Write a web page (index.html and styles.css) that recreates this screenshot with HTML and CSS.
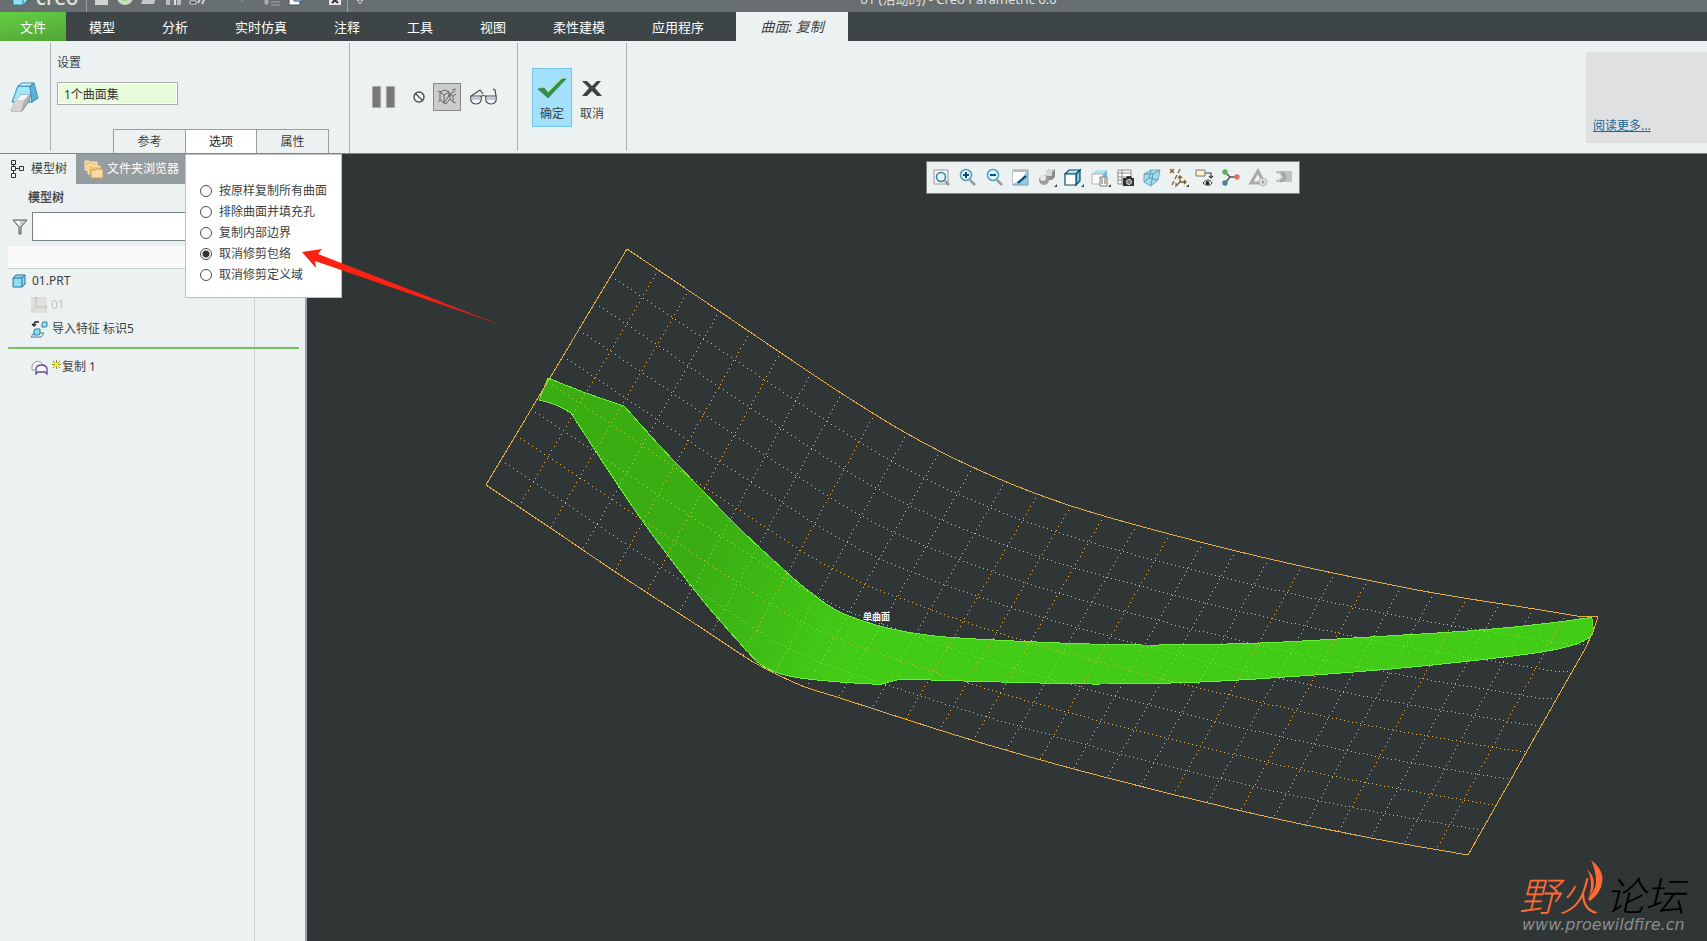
FILE: index.html
```html
<!DOCTYPE html>
<html lang="zh-CN">
<head>
<meta charset="utf-8">
<title>01 (活动的) - Creo Parametric 6.0</title>
<link rel="stylesheet" href="styles.css">
</head>
<body>
<header class="titlebar">
  <div class="quick">
    <svg class="q-logo" width="16" height="20" viewBox="0 0 16 20"><path d="M1 4l4-3h10v12l-4 4H1z" fill="#8fe0f7" stroke="#2b7fa0"/><path d="M11 17V5l4-4" fill="none" stroke="#2b7fa0"/></svg>
    <span class="brand">creo</span>
    <i class="q-sep"></i>
    <svg class="q-icons" width="252" height="20" viewBox="0 0 252 20">
      <path d="M0 0h13v17H0z" fill="#d2d4d4"/>
      <circle cx="30" cy="9" r="8" fill="#cfd8cb"/><circle cx="30" cy="8" r="5" fill="#8fdc6a"/>
      <path d="M51 3h12l-4 13H46z" fill="#c6c8c8"/>
      <path d="M71 1h15v16H71z" fill="#b9bcbc"/><path d="M75 11h7v6h-7z" fill="#747a7a"/><path d="M79 12h2v5h-2z" fill="#ddd"/>
      <path d="M95 13h6v3h-6z" fill="#3a4040" stroke="#ddd"/><path d="M103 15l4-8M107 16l4-8" stroke="#d0d3d3" stroke-width="2"/>
      <path d="M134 12c4-5 9-5 14 2M141 8h7" stroke="#7f8787" stroke-width="2" fill="none"/>
      <path d="M170 12h3v4h-3zM176 11h9M176 14h9M176 17h9" fill="#aaa" stroke="#aaa"/>
      <path d="M194 7h11v10h-11z" fill="#fff" stroke="#456"/><path d="M199 2h9v11h-9z" fill="#a9dcf5" stroke="#456"/><path d="M202 5h5v5h-5z" fill="#fff"/>
      <path d="M234 4h12v13h-12z" fill="#e8e8e8"/><path d="M237 9l6 6M243 9l-6 6" stroke="#333" stroke-width="2"/>
    </svg>
    <i class="q-sep"></i>
    <svg width="8" height="20" viewBox="0 0 8 20"><path d="M1 12h6l-3 4z" fill="none" stroke="#d0d5d5"/></svg>
  </div>
  <div class="app-title">01 (活动的) - Creo Parametric 6.0</div>
</header>

<nav class="menubar">
  <button class="tab file">文件</button>
  <button class="tab">模型</button>
  <button class="tab">分析</button>
  <button class="tab">实时仿真</button>
  <button class="tab">注释</button>
  <button class="tab">工具</button>
  <button class="tab">视图</button>
  <button class="tab">柔性建模</button>
  <button class="tab">应用程序</button>
  <button class="tab current">曲面: 复制</button>
</nav>

<section class="ribbon">
  <div class="cell feature">
    <svg width="30" height="30" viewBox="0 0 30 30"><path d="M7 4l4-3h12l5 15-6 5H2z" fill="#8ed6f0"/><path d="M8 4h12l2 16H2z" fill="#a5e6fb" stroke="#3b8fb5"/><path d="M8 4l4-3h12l-4 3z" fill="#d6f6ff" stroke="#3b8fb5"/><path d="M20 4l4-3 4 15-6 4z" fill="#5fb0d3" stroke="#3b8fb5"/><path d="M6 18l5-5h9l-1 6-7 10H1z" fill="#b3b3b3" stroke="#8d8d8d"/><path d="M5 18h9l-3 11H1z" fill="#d4d4d4"/><path d="M6 18l5-5h8l-5 5z" fill="#f7f7f7"/></svg>
  </div>
  <div class="cell settings">
    <label class="set-label" for="surf">设置</label>
    <input id="surf" class="set-input" type="text" value="1个曲面集">
    <div class="subtabs">
      <button class="subtab">参考</button>
      <div class="holder">
        <button class="subtab on">选项</button>
        <div class="popup">
          <label><input type="radio" name="opt">按原样复制所有曲面</label>
          <label><input type="radio" name="opt">排除曲面并填充孔</label>
          <label><input type="radio" name="opt">复制内部边界</label>
          <label><input type="radio" name="opt" checked>取消修剪包络</label>
          <label><input type="radio" name="opt">取消修剪定义域</label>
        </div>
      </div>
      <button class="subtab">属性</button>
    </div>
  </div>
  <div class="cell preview">
    <button class="ic pause" aria-label="暂停"><svg width="24" height="22" viewBox="0 0 24 22"><path d="M0 0h9v22H0zM14 0h9v22h-9z" fill="#787879" stroke="#d8dada"/></svg></button>
    <button class="ic ban" aria-label="无预览"><svg width="12" height="12" viewBox="0 0 12 12"><circle cx="6" cy="6" r="5" fill="#f6f8f8" stroke="#4f5152" stroke-width="1.500"/><path d="M2 2l8 8" stroke="#4f5152" stroke-width="1.500"/></svg></button>
    <button class="ic toggled" aria-label="分离预览"><svg width="20" height="18" viewBox="0 0 20 18" fill="none" stroke="#4c4d4e" stroke-width=".8"><path d="M1 3l2 1v8l-2 2M3 12l4 3M3 4l5-2 4 2M3 4l4 3v8l2 1M7 7l5-3v5M7 15l6-9M9 16l4-5V6l5-3M13 6l3 2v6M16 8l3-2M16 14l3 1M13 11l3 3M15 2l4-1" /></svg></button>
    <button class="ic glasses" aria-label="预览"><svg width="27" height="18" viewBox="0 0 27 18"><path d="M1 8h10c1 5-1 8-5 8s-6-3-5-8zM16 8h10c1 5-1 8-5 8s-6-3-5-8z" fill="#f6f9fb" stroke="#4c4e50" stroke-width="1.200"/><path d="M2 9h8v3H2zM17 9h8v3h-8z" fill="#b9cfe2"/><path d="M11 9c1-2 4-2 5 0M1 8l9-6 3 4M26 8l-1-6-2-1" fill="none" stroke="#4c4e50" stroke-width="1.200"/></svg></button>
  </div>
  <div class="cell confirm">
    <button class="big ok"><svg width="30" height="24" viewBox="0 0 30 24"><path d="M1 12l5-1 5 4L24 2l4-1-17 20z" fill="#b7ee6a"/><path d="M1 13l6-1 4 5L25 3h4L11 22z" fill="#2e9351" stroke="#2a6f42" stroke-width=".6"/></svg><span>确定</span></button>
    <button class="big"><svg width="20" height="24" viewBox="0 0 20 24"><path d="M0 5h5l5 5 5-5h4l-6 7 7 8h-5l-5-5-5 5H0l7-8z" fill="#434343"/></svg><span>取消</span></button>
  </div>
  <aside class="more"><a href="#">阅读更多...</a></aside>
</section>

<main class="work">
  <section class="side">
    <div class="side-tabs">
      <button class="side-tab on"><svg width="14" height="20" viewBox="0 0 14 20" fill="none" stroke="#333"><path d="M1.500 1.500h4v4h-4zM1.500 7.500h4v4h-4zM9.500 7.500h4v4h-4zM1.500 14.500h4v4h-4zM3.500 5v3M3.500 12v3M5 9.500h4"/></svg>模型树</button>
      <button class="side-tab"><svg width="20" height="20" viewBox="0 0 20 20"><path d="M1 2h4l1 1h7v8H1z" fill="#f3c67c" stroke="#fbe9c4"/><path d="M4 6h4l1 1h7v8H4z" fill="#f3c67c" stroke="#fbe9c4"/><path d="M7 11h4l1-1h7v9H7z" fill="#f8dba6" stroke="#c99a4c"/></svg>文件夹浏览器</button>
    </div>
    <h2 class="side-title">模型树</h2>
    <div class="filter">
      <svg width="16" height="16" viewBox="0 0 16 16"><path d="M1 1h14L9 8v7H7V8z" fill="#c9cbcc" stroke="#565859"/><path d="M3 2h5v5z" fill="#fff"/></svg>
      <input type="text" aria-label="筛选">
    </div>
    <div class="tree-head"></div>
    <div class="tree">
      <div class="row"><svg width="14" height="14" viewBox="0 0 14 14"><path d="M1 4l3-3h9v9l-3 3H1z" fill="#8fdcf4" stroke="#2a6f90"/><path d="M1 4h9v9M10 4l3-3" fill="none" stroke="#2a6f90"/></svg>01.PRT</div>
      <div class="row sub dim"><svg width="16" height="16" viewBox="0 0 16 16"><path d="M0 0h16v16H0z" fill="#e0e0dd"/><path d="M5 0v10h11M5 10l-5 5M3 2l2-2 2 2M14 8l2 2-2 2" fill="none" stroke="#c4c2b4"/></svg>01</div>
      <div class="row sub"><svg width="17" height="17" viewBox="0 0 17 17"><path d="M11 3l1-2h4v4l-1 1h-4z" fill="#9fe2f7" stroke="#2a7f9c"/><path d="M8 1H5c-2 0-2 1-2 4M1 3l2 2 2-2" fill="none" stroke="#222" stroke-width="1.300"/><path d="M0 16l3-4h10l-3 4z" fill="#fff" stroke="#2a7f9c"/><path d="M3 9l1-1h5v5l-1 1H3z" fill="#8fdcf4" stroke="#2a7f9c"/></svg>导入特征 标识5</div>
      <div class="insert"></div>
      <div class="row sub last"><svg width="17" height="15" viewBox="0 0 17 15"><path d="M1 10V6c2-6 9-6 11-1M1 10h3" fill="#f8f8f8" stroke="#999"/><path d="M5 14V8c2-4 9-4 11 0v6l-2-2H7z" fill="#f7f4fb" stroke="#65498c" stroke-width="1.300"/></svg><svg width="9" height="9" viewBox="0 0 10 10"><path d="M5 0v10M0 5h10M1 1l8 8M9 1L1 9" stroke="#827b10"/><path d="M3 3h4v4H3z" fill="#fff200"/></svg>复制 1</div>
    </div>
  </section>

  <section class="view">
    <svg class="scene" viewBox="307 154 1400 787" preserveAspectRatio="xMinYMin meet">
      <defs>
        <linearGradient id="skin" gradientUnits="userSpaceOnUse" x1="700" y1="560" x2="860" y2="640"><stop offset="0" stop-color="#3aad13"/><stop offset="1" stop-color="#43cc17"/></linearGradient>
        <clipPath id="inside"><path id="clip-shape"/></clipPath>
      </defs>
      <path id="dots" fill="#efb450"/>
      <path id="surface" class="surface" fill="url(#skin)"/>
      <path id="dots-in" fill="#b0cf28" clip-path="url(#inside)"/>
      <path id="bounds" class="bounds"/>
      <text class="tag" x="863" y="620">单曲面</text>
    </svg>
    <div class="viewbar">
      <button aria-label="重新调整"><svg viewBox="0 0 26 26"><path d="M5 5h14v14H5z" fill="#f5f5f5" stroke="#9a9a9a"/><circle cx="12" cy="12" r="4.500" fill="#e4f6fc" stroke="#2f7fa6" stroke-width="1.500"/><path d="M16 16l4 4" stroke="#999" stroke-width="2.500"/></svg></button>
      <button aria-label="放大"><svg viewBox="0 0 26 26"><circle cx="11" cy="10" r="5.500" fill="#e4f8fe" stroke="#4b9dc0" stroke-width="1.500"/><path d="M8 10h6M11 7v6" stroke="#0c4f78" stroke-width="2"/><path d="M15 15l5 5" stroke="#999" stroke-width="2.500"/></svg></button>
      <button aria-label="缩小"><svg viewBox="0 0 26 26"><circle cx="11" cy="10" r="5.500" fill="#e4f8fe" stroke="#4b9dc0" stroke-width="1.500"/><path d="M8 10h6" stroke="#0c4f78" stroke-width="2"/><path d="M15 15l5 5" stroke="#999" stroke-width="2.500"/></svg></button>
      <button aria-label="重画"><svg viewBox="0 0 26 26"><path d="M5 5h15v15H5z" fill="#8ecbe4" stroke="#8a9aa5"/><path d="M5 7h13c-3 5-7 9-13 12z" fill="#fff"/><path d="M10 18l8-7" stroke="#0d4763" stroke-width="2"/><path d="M5 5h15v2H5z" fill="#bbb"/></svg></button>
      <button aria-label="渲染"><svg viewBox="0 0 26 26"><path d="M12 7l3-3h6v8l-3 3h-6z" fill="#8c8c8c"/><path d="M12 7l3-3h6l-3 3v4h-6z" fill="#d9d9d9"/><circle cx="10" cy="15" r="5" fill="#9b9b9b"/><circle cx="9" cy="13" r="3" fill="#e6e6e6"/><path d="M23 19v3h-3z" fill="#444"/></svg></button>
      <button aria-label="显示样式"><svg viewBox="0 0 26 26"><path d="M5 9l4-4h11l-4 4z" fill="#aee6f8" stroke="#0f4c6b" stroke-width="1.200"/><path d="M16 9l4-4v11l-4 4z" fill="#79c4e2" stroke="#0f4c6b" stroke-width="1.200"/><path d="M5 9h11v11H5z" fill="#fff" stroke="#0f4c6b" stroke-width="1.200"/><path d="M24 19v3h-3z" fill="#444"/></svg></button>
      <button aria-label="已保存方向"><svg viewBox="0 0 26 26"><path d="M5 9l4-4h11l-4 4z" fill="#b5e4f4"/><path d="M16 9l4-4v10l-4 4z" fill="#6fb9d8"/><path d="M5 9h11v10H5z" fill="#fbfbfb" stroke="#a7b6bd"/><path d="M13 12h7v9h-7z" fill="#fff" stroke="#777"/><path d="M14 14h2M17 14h2M14 16h2M17 16h2M14 18h2M17 18h2" stroke="#666"/><path d="M24 19v3h-3z" fill="#444"/></svg></button>
      <button aria-label="视图管理器"><svg viewBox="0 0 26 26"><path d="M5 5h13v14H5zM5 8h13M5 12h13M5 15h13M9 5v14" fill="#fff" stroke="#888"/><path d="M10 13h3l1-2h4l1 2h2v8H10z" fill="#333"/><circle cx="16" cy="17" r="2.500" fill="#777" stroke="#ddd"/></svg></button>
      <button aria-label="透视图"><svg viewBox="0 0 26 26"><path d="M5 9l7-4h9l-2 10-7 6-7-4z" fill="#a7dbee" stroke="#6ca9c4"/><path d="M5 9h9l7-4M14 9l-2 11M12 5l-2 8-5 4M10 13l9 2" fill="none" stroke="#5a9bb8"/></svg></button>
      <button aria-label="基准显示"><svg viewBox="0 0 26 26"><g fill="none" stroke="#80602a" stroke-width="1.300"><path d="M4 4l4 4M8 4l-4 4M14 4l-2 4M11 10l-2 4M8 16l-2 4"/><path d="M14 11v6M14 17h6M18 15l2 2-2 2M12 13l2-2 2 2M14 17l-4 4v-3"/></g><path d="M23 19v3h-3z" fill="#444"/></svg></button>
      <button aria-label="注释显示"><svg viewBox="0 0 26 26"><path d="M4 5h9v6H4z" fill="#fff3cf" stroke="#777"/><path d="M13 8h6v5M17 11l2 2 2-2" fill="none" stroke="#444" stroke-width="1.200"/><path d="M11 18c3-4 7-4 9 0-2 3-6 3-9 0z" fill="#fff" stroke="#333"/><circle cx="15.500" cy="18" r="2" fill="#222"/></svg></button>
      <button aria-label="旋转中心"><svg viewBox="0 0 26 26"><path d="M7 7l5 5-5 6M12 12h7" fill="none" stroke="#555" stroke-width="1.500"/><circle cx="7" cy="7" r="2.700" fill="#5fae5a"/><circle cx="7" cy="18" r="2.700" fill="#3d83ac"/><circle cx="19" cy="12" r="2.700" fill="#e0716b"/></svg></button>
      <button aria-label="仿真" disabled><svg viewBox="0 0 26 26"><path d="M13 6l6 12H6z" fill="none" stroke="#a9a9a9" stroke-width="3"/><circle cx="18" cy="17" r="4" fill="#e0e0e0" stroke="#b5b5b5"/><path d="M17 15l3 2-3 2z" fill="#999"/></svg></button>
      <button aria-label="结果" disabled><svg viewBox="0 0 26 26"><path d="M5 6h16v11H5v-2c7 0 7-7 0-7z" fill="#c1c1c1"/><path d="M10 8c6 2 5 7-1 8" fill="none" stroke="#a5a5a5" stroke-width="3"/></svg></button>
    </div>
    <div class="mark">
      <div class="mark-name"><span class="fire">野火</span><span>论坛</span>
        <svg class="flame" width="16" height="42" viewBox="0 0 16 42"><path d="M4 0c8 6 13 14 11 22-1 8-6 15-12 19L1 39c5-7 8-11 8-18C9 13 7 7 4 0z" fill="#ff6a35"/><path d="M0 9c6 6 8 10 6 21l-4 8c2-9 4-18-2-29z" fill="#ff6a35"/></svg>
      </div>
      <div class="mark-url">www.proewildfire.cn</div>
    </div>
  </section>
</main>

<svg class="pointer" width="210" height="82" viewBox="302 248 210 82"><defs><linearGradient id="red" x1="0" x2="1"><stop offset=".6" stop-color="#fb2113"/><stop offset="1" stop-color="#8b2c28"/></linearGradient></defs><path d="M302 252l20-3-4 5 191 74-194-67 1 7z" fill="url(#red)"/></svg>
<script src="scene.js"></script>
</body>
</html>
```
FILE: styles.css
```css
* { box-sizing: border-box; }
body {
  margin: 0;
  height: 100vh;
  display: flex;
  flex-direction: column;
  overflow: hidden;
  position: relative;
  background: #ecf1f2;
  color: #3c3f41;
  font: 12px/16px "Noto Sans", "Noto Sans CJK SC", sans-serif;
}
button {
  font: inherit;
  color: inherit;
  border: 0;
  margin: 0;
  padding: 0;
  background: none;
}
svg { display: block; flex: none; }

/* The top of the title bar is scrolled off the window */
.titlebar {
  flex: none;
  height: 32px;
  margin-top: -20px;
  padding-top: 4px;
  display: grid;
  grid-template-columns: 1fr auto 1fr;
  align-items: center;
  background: #686f70;
  color: #dfe3e3;
}
.quick { display: flex; align-items: center; gap: 8px; padding-left: 12px; }
.brand { font: 600 20px/24px "Open Sans", sans-serif; width: 42px; }
.q-sep { width: 1px; height: 28px; background: #9aa0a0; }
.q-icons { margin-right: -8px; }
.app-title { margin-left: 210px; padding-top: 2px; font-size: 13px; line-height: 20px; }

.menubar {
  flex: none;
  height: 29px;
  display: flex;
  gap: 1px;
  background: #3d4546;
  color: #fff;
  font-size: 13px;
}
.tab { padding: 0 23px; white-space: nowrap; }
.file { width: 66px; padding: 0; margin-right: -1px; background: linear-gradient(170deg, #63cf43, #54a437); }
.current {
  width: 112px;
  padding: 0;
  margin-left: 8px;
  background: #ecf1f2;
  color: #3c3f41;
  font-size: 14px;
  font-style: italic;
}

.ribbon {
  flex: none;
  height: 113px;
  display: flex;
  align-items: stretch;
  border-bottom: 1px solid #7d8788;
}
.cell {
  display: flex;
  align-items: center;
  border-right: 1px solid #aab0b1;
  margin: 2px 0;
}
.feature { width: 51px; padding-left: 10px; }
.settings {
  width: 299px;
  margin-bottom: 0;
  flex-direction: column;
  align-items: flex-start;
  padding-left: 6px;
}
.set-label { margin-top: 12px; }
.set-input {
  width: 121px;
  height: 23px;
  margin-top: 11px;
  padding: 0 6px;
  border: 1px solid #a9adae;
  background: #e8fbdb;
  box-shadow: inset 0 0 0 1px #fff;
  color: #333;
  font: inherit;
}
.subtabs { display: flex; margin: auto 0 0 56px; }
.subtab {
  width: 72px;
  height: 24px;
  border: 1px solid #999fa0;
  border-bottom: 0;
  background: #eef1f2;
}
.subtabs > .subtab:first-child { border-right: 0; }
.subtabs > .subtab:last-child { border-left: 0; }
.subtab.on { background: #fff; color: #222; }
.holder { position: relative; }
.popup {
  position: absolute;
  z-index: 3;
  top: 25px;
  left: 0;
  width: 157px;
  height: 144px;
  padding: 25px 0 0 14px;
  border: 1px solid #bcc1c2;
  background: #fff;
  display: flex;
  flex-direction: column;
}
.popup label { display: flex; align-items: center; gap: 7px; height: 21px; white-space: nowrap; }
.popup input {
  appearance: none;
  flex: none;
  width: 12px;
  height: 12px;
  margin: 0;
  border: 1px solid #4a4d4f;
  border-radius: 50%;
  background: #fff;
}
.popup input:checked { background: radial-gradient(circle, #333 0 3px, #fff 4px); }

.preview { width: 168px; padding-left: 22px; }
.ban { margin-left: 17px; }
.toggled {
  width: 28px;
  height: 28px;
  margin-left: 8px;
  display: flex;
  align-items: center;
  justify-content: center;
  border: 1px solid #858788;
  background: #cbcccd;
}
.glasses { margin-left: 9px; }
.confirm { width: 109px; padding-left: 14px; }
.big {
  width: 40px;
  height: 59px;
  padding-top: 4px;
  display: flex;
  flex-direction: column;
  align-items: center;
  justify-content: center;
  gap: 6px;
  border: 1px solid transparent;
}
.ok { background: #a3e0fc; border-color: #73c3e6; }
.more {
  width: 121px;
  margin: 11px 0 10px auto;
  padding: 66px 0 0 7px;
  background: #dfe0e1;
}
.more a { color: #1a6496; }

.work { flex: 1; min-height: 0; display: flex; }
.side {
  flex: none;
  width: 307px;
  border-right: 2px solid #98a1a5;
  display: flex;
  flex-direction: column;
}
.side-tabs { display: flex; height: 30px; }
.side-tab {
  display: flex;
  align-items: center;
  gap: 3px;
  padding: 0 8px;
  background: #949d9f;
  color: #fff;
}
.side-tab.on { width: 76px; padding: 0 0 0 10px; gap: 7px; background: none; color: inherit; }
.side-title { margin: 6px 0 6px 28px; font: inherit; -webkit-text-stroke: 0.3px; }
.filter { display: flex; align-items: center; gap: 4px; padding: 0 8px 0 12px; }
.filter input { flex: 1; height: 29px; border: 1px solid #7b8283; background: #fff; font: inherit; }
.tree-head { height: 23px; margin: 5px 6px 0 8px; background: #fafafa; border-bottom: 1px solid #cdd2d4; }
.tree {
  flex: 1;
  padding: 0 6px 0 8px;
  background: linear-gradient(#cdd2d4, #cdd2d4) 254px 0 / 1px 100% no-repeat;
}
.row { display: flex; align-items: center; gap: 6px; height: 24px; padding-left: 4px; }
.row.sub { padding-left: 23px; gap: 4px; }
.dim { color: #c2c5c6; }
.insert { height: 2px; margin: 6px 0; background: #78bf60; }
.row.last { gap: 1px; }
.row.last svg:first-child { margin-right: 3px; }
.row.last svg:nth-child(2) { margin-bottom: 6px; }

.view { flex: 1; min-width: 0; position: relative; background: #303535; overflow: hidden; }
.scene { width: 100%; height: 100%; shape-rendering: crispEdges; }
.surface { stroke: #6cf03a; stroke-width: 1; }
.bounds { fill: none; stroke: #e8ac42; stroke-width: 1; }
.tag { fill: #fff; font: bold 9px "Noto Sans CJK SC", sans-serif; }
.viewbar {
  position: absolute;
  top: 7px;
  left: 619px;
  width: 374px;
  height: 33px;
  padding: 0 2px;
  display: flex;
  align-items: center;
  justify-content: space-between;
  border: 1px solid #7c8586;
  background: #ecf1f2;
}
.viewbar svg { width: 26px; height: 26px; }
.mark { position: absolute; right: 20px; bottom: 7px; width: 168px; }
.mark-name { position: relative; display: flex; gap: 6px; font: italic 300 40px/44px "Noto Sans CJK SC", sans-serif; color: #000; }
.fire { color: #ff6a35; }
.flame { position: absolute; left: 68px; top: -12px; }
.mark-url { padding-left: 3px; color: #8b8e8e; font: italic 16px/18px "DejaVu Sans", sans-serif; }
.pointer { position: absolute; z-index: 4; left: 302px; top: 248px; pointer-events: none; }
```
FILE: scene.js
```js
const COLS = 30;
const ROWS = 9;

const topEdge = [[627,249],[716,309],[778,351],[841,393],[906,433],[970,466],[1037,494],[1104,516],[1200,542],[1270,559],[1338,574],[1434,593],[1535,609],[1583,617]];
const bottomEdge = [[486,485],[552,529],[620,575],[700,627],[730,647],[757,664],[800,685],[840,698],[908,720],[975,741],[1041,760],[1108,778],[1200,801],[1273,818],[1371,838],[1468,855]];
const leftRows = [249,276,303,330,356,382,409,435,460,485];

// Points along a Catmull-Rom curve through the given list
function smooth(points, steps = 12) {
  const out = [];
  for (let i = 0; i < points.length - 1; i++) {
    const a = points[Math.max(i - 1, 0)], b = points[i];
    const c = points[i + 1], d = points[Math.min(i + 2, points.length - 1)];
    for (let s = 0; s < steps; s++) {
      const t = s / steps;
      out.push([0, 1].map(k => 0.5 * (2 * b[k] + (c[k] - a[k]) * t
        + (2 * a[k] - 5 * b[k] + 4 * c[k] - d[k]) * t * t
        + (3 * b[k] - a[k] - 3 * c[k] + d[k]) * t * t * t)));
    }
  }
  out.push(points[points.length - 1]);
  return out;
}
const line = pts => pts.map(p => p[0].toFixed(1) + ' ' + p[1].toFixed(1)).join('L');

function yAt(curve, x) {
  for (let i = 1; i < curve.length; i++) {
    if (curve[i][0] >= x) {
      const [x0, y0] = curve[i - 1], [x1, y1] = curve[i];
      return y0 + (y1 - y0) * (x - x0) / (x1 - x0);
    }
  }
  return curve[curve.length - 1][1];
}
function blend(stops, v) {
  for (let i = 1; i < stops.length; i++) {
    if (v <= stops[i][0]) {
      const [a, x0] = stops[i - 1], [b, x1] = stops[i];
      return x0 + (x1 - x0) * (v - a) / (b - a);
    }
  }
}

const topCurve = smooth(topEdge), bottomCurve = smooth(bottomEdge);
const upper = i => {
  const x = blend([[0, 627], [7, 841], [14, 1070], [30, 1598]], i);
  return [x, Math.min(yAt(topCurve, x), 618)];
};
const lower = i => {
  const x = blend([[0, 486], [11, 838], [23, 1240], [30, 1468]], i);
  return [x, yAt(bottomCurve, x)];
};

let dots = '';
const dot = (x, y) => { dots += `M${Math.round(x)} ${Math.round(y)}h1v1h-1z`; };
for (let i = 1; i < COLS; i++) {
  const [ax, ay] = upper(i), [bx, by] = lower(i);
  for (let y = ay + 4; y < by; y += 4) dot(ax + (bx - ax) * (y - ay) / (by - ay), y);
}
for (let j = 1; j < ROWS; j++) {
  const t = (leftRows[j] - 249) / 236;
  const pts = [];
  for (let i = 0; i <= COLS; i += 0.5) {
    const a = upper(i), b = lower(i);
    pts.push([a[0] + (b[0] - a[0]) * t, a[1] + (b[1] - a[1]) * t]);
  }
  for (let x = pts[0][0] + 4; x < pts[pts.length - 1][0]; x += 4) dot(x, yAt(pts, x));
}
const set = (id, d) => document.getElementById(id).setAttribute('d', d);
set('dots', dots);
set('dots-in', dots);
set('bounds', 'M' + line(topCurve) + 'L1590 616L1598 617L1593 632L1585 649L1565 684L'
  + line(bottomCurve.slice().reverse()) + 'L627 249');

const sides = [
  [[548,378],[586,393],[624,406]],
  [[624,406],[660,446],[700,488],[741,530],[782,568],[810,592],[840,612],[880,626],[920,634],[960,638],[1060,643],[1150,645],[1260,643],[1370,637],[1480,630],[1550,623],[1587,618],[1592,619]],
  [[1592,619],[1593,632],[1587,639],[1570,646],[1535,653],[1470,661],[1390,669],[1300,676],[1200,682],[1100,684],[1000,682],[930,680],[906,679],[893,681],[882,684],[872,684],[840,682],[800,678],[775,672],[757,662]],
  [[757,662],[730,632],[700,597],[649,530],[610,473],[571,413]],
  [[571,413],[556,405],[539,400]],
  [[539,400],[548,378]]
];
const skin = 'M' + sides.map(s => line(smooth(s))).join('L') + 'Z';
set('surface', skin);
set('clip-shape', skin);
```
